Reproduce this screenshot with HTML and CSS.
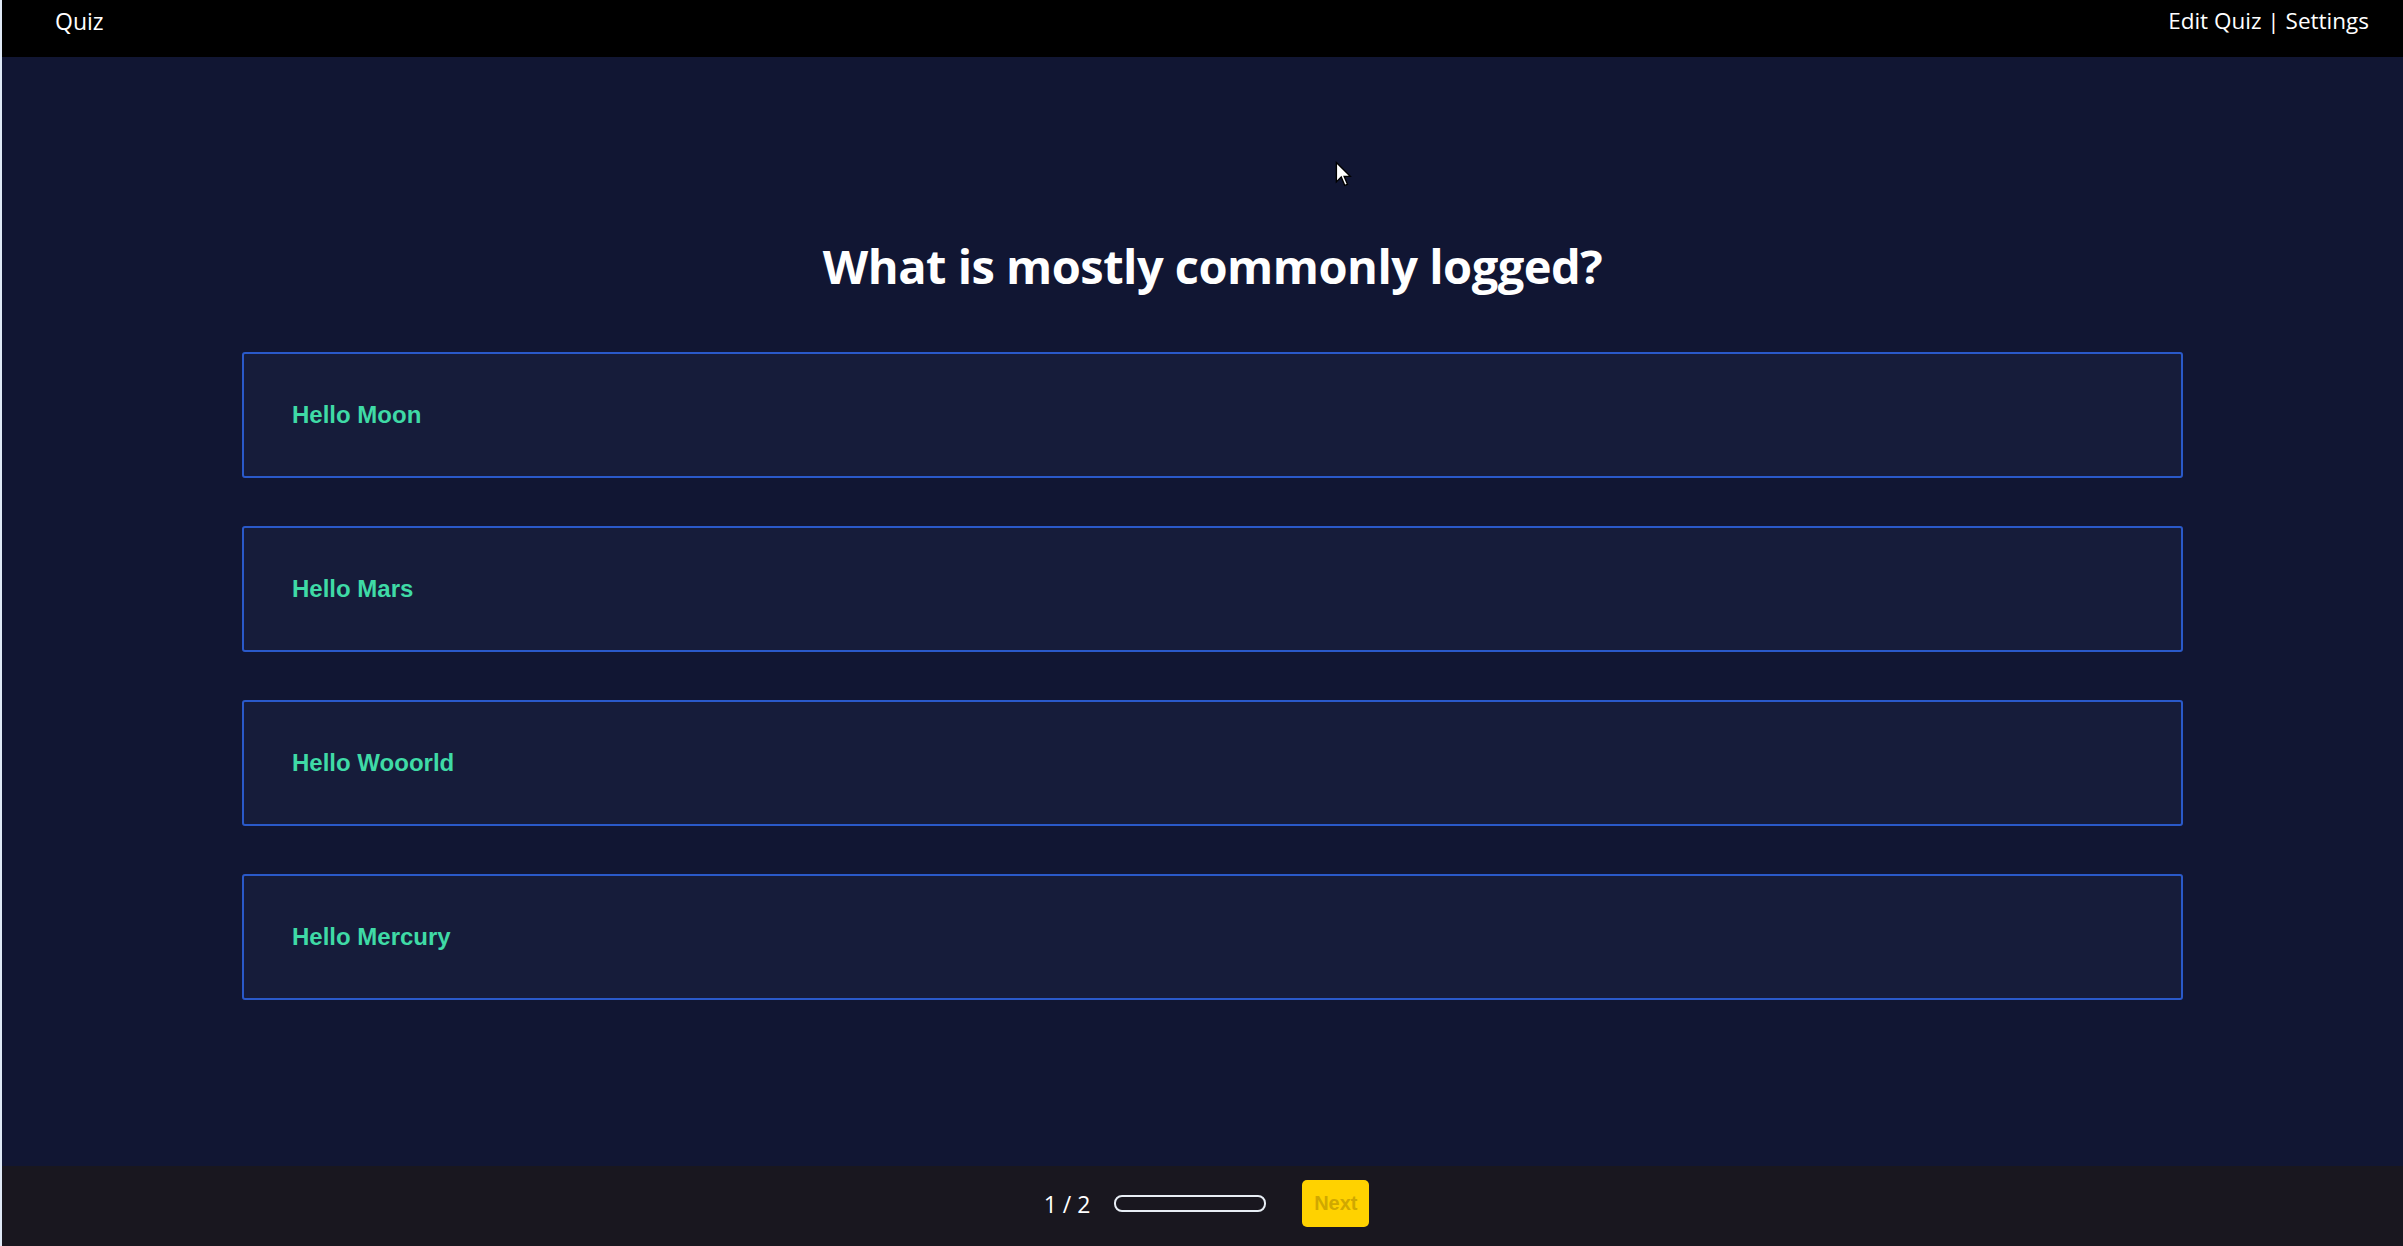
FILE: index.html
```html
<!DOCTYPE html>
<html>
<head>
<meta charset="utf-8">
<link rel="stylesheet" href="styles.css">
</head>
<body>
<div class="app">
  <header class="topbar">
    <div class="brand">Quiz</div>
    <nav class="links">Edit Quiz | Settings</nav>
  </header>
  <main class="main">
    <h1 class="question">What is mostly commonly logged?</h1>
    <div class="options">
      <div class="option">Hello Moon</div>
      <div class="option">Hello Mars</div>
      <div class="option">Hello Wooorld</div>
      <div class="option">Hello Mercury</div>
    </div>
    <svg class="cursor" width="18" height="28" viewBox="0 0 13 20"><path d="M1 1 L1 15 L4.5 11.5 L7 17.5 L9 16.7 L6.6 11 L11 11 Z" fill="#fff" stroke="#000" stroke-width="1"/></svg>
  </main>
  <footer class="footer">
    <span class="count">1 / 2</span>
    <div class="progress"></div>
    <button class="next">Next</button>
  </footer>
</div>
</body>
</html>
```
FILE: styles.css
```css
html, body {
  margin: 0;
  padding: 0;
  height: 100%;
  background: #dfe9f6;
}
.app {
  margin-left: 2px;
  height: 1246px;
  display: flex;
  flex-direction: column;
  font-family: "Open Sans", "Noto Sans", sans-serif;
}
.topbar {
  height: 57px;
  background: #000;
  color: #fff;
  display: flex;
  justify-content: space-between;
  align-items: flex-start;
  padding: 5px 34px 0 53px;
  box-sizing: border-box;
  font-size: 23px;
}
.links {
  font-size: 22.5px;
}
.main {
  flex: 1;
  background: #111633;
  position: relative;
  padding: 0 220px 0 240px;
}
.question {
  margin: 0;
  padding-top: 177px;
  text-align: center;
  color: #fff;
  font-size: 47px;
  font-weight: 700;
  line-height: 64px;
  letter-spacing: -0.5px;
}
.options {
  margin-top: 54px;
  display: flex;
  flex-direction: column;
  gap: 48px;
}
.option {
  height: 126px;
  box-sizing: border-box;
  border: 2px solid #2a59c9;
  border-radius: 3px;
  background: #161c3a;
  color: #3fdaa6;
  font-family: "Liberation Sans", Arial, sans-serif;
  font-weight: 700;
  font-size: 24px;
  display: flex;
  align-items: center;
  padding-left: 48px;
}
.cursor {
  position: absolute;
  left: 1333px;
  top: 104px;
}
.footer {
  height: 80px;
  box-sizing: border-box;
  background: #19171f;
  display: flex;
  align-items: center;
  justify-content: center;
  padding: 0 0 5px 8px;
}
.count {
  color: #fff;
  font-size: 23px;
  margin-right: 24px;
}
.progress {
  width: 152px;
  height: 17px;
  box-sizing: border-box;
  border: 2px solid #e8eef5;
  border-radius: 8px;
  margin-right: 36px;
}
.next {
  width: 67px;
  height: 47px;
  border: none;
  border-radius: 5px;
  background: #ffd200;
  color: #d0a800;
  font-family: "Liberation Sans", Arial, sans-serif;
  font-weight: 700;
  font-size: 20px;
  padding: 0;
}
```
